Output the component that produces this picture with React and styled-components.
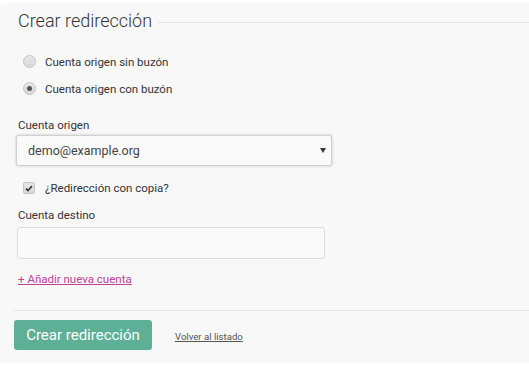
import React from 'react';
import styled, { createGlobalStyle } from 'styled-components';

const GlobalStyle = createGlobalStyle`
  html, body {
    margin: 0;
    padding: 0;
    background: #ffffff;
    overflow: hidden;
  }
  body {
    font-family: Roboto, 'Liberation Sans', sans-serif;
    color: #333;
  }
`;

const Panel = styled.div`
  background: #f8f8f8;
  border-radius: 4px 0 0 4px;
  margin-top: 3px;
  height: 360px;
  box-sizing: border-box;
  padding: 7px 0 0 18px;
`;

const Legend = styled.div`
  display: flex;
  align-items: center;
  height: 22px;
`;

const Title = styled.h1`
  margin: 0;
  font-size: 18px;
  font-weight: 300;
  line-height: 22px;
  color: #333;
  white-space: nowrap;
`;

const TitleRule = styled.div`
  flex: 1;
  height: 1px;
  margin: 2px 0 0 6px;
  background: #e4e4e4;
`;

const RadioGroup = styled.div`
  margin-top: 16px;
  display: flex;
  flex-direction: column;
`;

const OptionRow = styled.label`
  display: flex;
  align-items: center;
  height: ${p => p.$height || 27}px;
  font-size: 11.5px;
  color: #333;
  margin-top: ${p => p.$top || 0}px;
`;

const Radio = styled.span`
  width: 11px;
  height: 11px;
  margin: 0 9px 0 5px;
  border-radius: 50%;
  border: 1px solid #c4c4c4;
  background: linear-gradient(#e6e6e6, #d8d8d8);
  display: flex;
  align-items: center;
  justify-content: center;

  &::after {
    content: '';
    display: ${p => (p.$checked ? 'block' : 'none')};
    width: 5px;
    height: 5px;
    border-radius: 50%;
    background: #555;
  }
`;

const Check = styled.span`
  width: 10px;
  height: 10px;
  margin: 0 10px 0 5px;
  border-radius: 2px;
  border: 1px solid #c4c4c4;
  background: linear-gradient(#e6e6e6, #d8d8d8);
  display: flex;
  align-items: center;
  justify-content: center;
`;

const FieldLabel = styled.div`
  font-size: 11.5px;
  line-height: 16px;
  color: #333;
  margin-top: ${p => p.$top}px;
`;

const Select = styled.div`
  margin: 2px 0 0 -2px;
  width: 316px;
  height: 31px;
  box-sizing: border-box;
  border: 1px solid #d0d0d0;
  border-radius: 3px;
  background: #fafafa;
  box-shadow: 0 0 2px 1px rgba(0, 0, 0, 0.1);
  display: flex;
  align-items: center;
  justify-content: space-between;
  padding: 0 5px 0 11px;
  font-size: 12.5px;
  color: #444;
`;

const Caret = styled.span`
  width: 0;
  height: 0;
  border-left: 3.5px solid transparent;
  border-right: 3.5px solid transparent;
  border-top: 5px solid #333;
`;

const TextInput = styled.div`
  margin: 4px 0 0 -1px;
  width: 308px;
  height: 32px;
  box-sizing: border-box;
  border: 1px solid #ddd;
  border-radius: 3px;
  background: #fafafa;
`;

const AddLink = styled.a`
  display: block;
  margin-top: 12px;
  font-size: 11.5px;
  line-height: 16px;
  color: #c2419b;
  text-decoration: underline;
  width: max-content;
`;

const Separator = styled.div`
  margin: 23px 0 0 -5px;
  height: 1px;
  background: #e6e6e6;
`;

const Actions = styled.div`
  display: flex;
  align-items: center;
  margin: 9px 0 0 -4px;
`;

const Button = styled.button`
  width: 138px;
  height: 30px;
  border: none;
  border-radius: 3px;
  background: #5db096;
  color: #fff;
  font-family: Roboto, 'Liberation Sans', sans-serif;
  font-size: 15px;
  padding: 0;
`;

const BackLink = styled.a`
  margin: 3px 0 0 23px;
  font-size: 9.6px;
  color: #555;
  text-decoration: underline;
`;

export default function App() {
  return (
    <>
      <GlobalStyle />
      <Panel>
        <Legend>
          <Title>Crear redirección</Title>
          <TitleRule />
        </Legend>

        <RadioGroup>
          <OptionRow>
            <Radio />
            Cuenta origen sin buzón
          </OptionRow>
          <OptionRow>
            <Radio $checked />
            Cuenta origen con buzón
          </OptionRow>
        </RadioGroup>

        <FieldLabel $top={15}>Cuenta origen</FieldLabel>
        <Select>
          demo@example.org
          <Caret />
        </Select>

        <OptionRow $height={22} $top={11}>
          <Check>
            <svg width="8" height="7" viewBox="0 0 8 7">
              <path d="M1 3.6 L3 5.6 L7 1" fill="none" stroke="#333" strokeWidth="1.6" />
            </svg>
          </Check>
          ¿Redirección con copia?
        </OptionRow>

        <FieldLabel $top={8}>Cuenta destino</FieldLabel>
        <TextInput />

        <AddLink>+ Añadir nueva cuenta</AddLink>

        <Separator />

        <Actions>
          <Button>Crear redirección</Button>
          <BackLink>Volver al listado</BackLink>
        </Actions>
      </Panel>
    </>
  );
}
